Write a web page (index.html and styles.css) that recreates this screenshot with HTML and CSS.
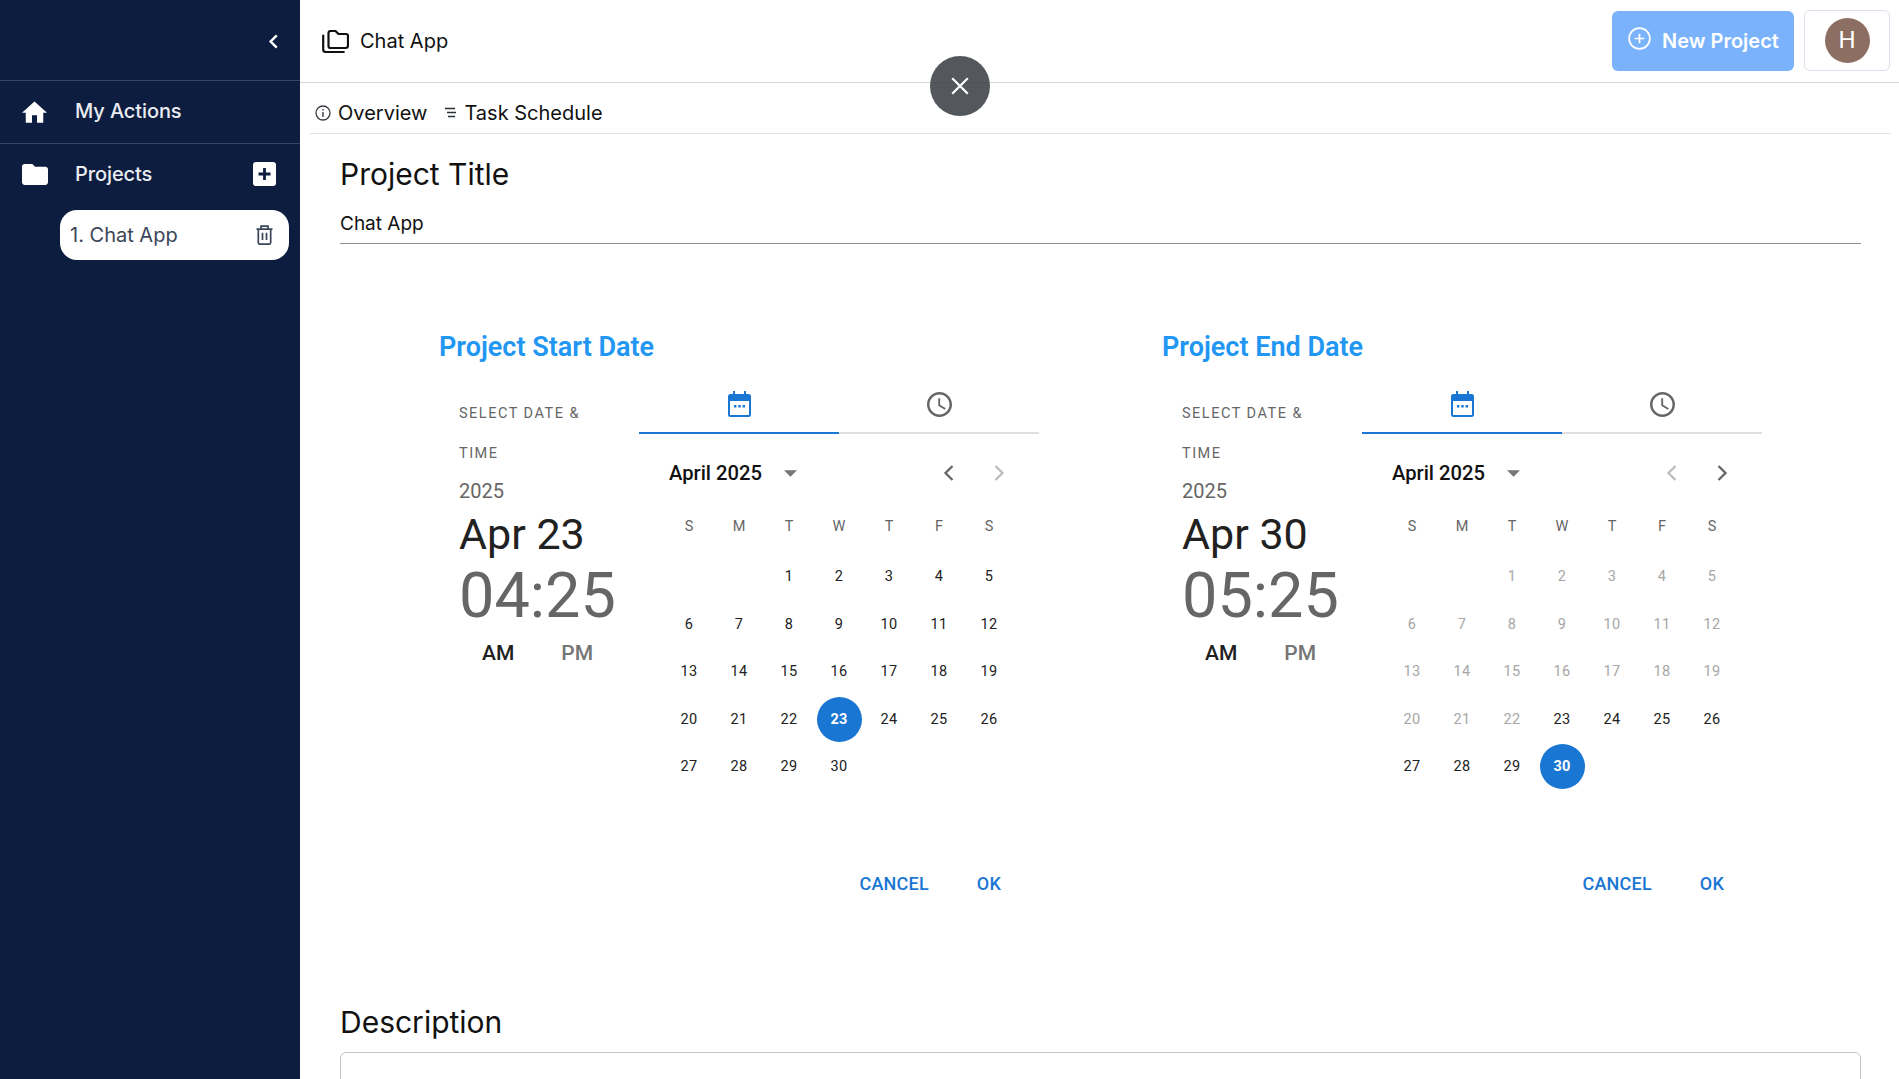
FILE: index.html
```html
<!DOCTYPE html>
<html lang="en">
<head>
<meta charset="utf-8">
<title>Chat App</title>
<link rel="stylesheet" href="styles.css">
</head>
<body>
<svg class="defs" width="0" height="0" aria-hidden="true">
  <symbol id="i-cal" viewBox="0 0 23 26">
    <path fill="currentColor" d="M5 0h2v3h9V0h2v3h2.5A2.5 2.5 0 0 1 23 5.500v18a2.500 2.500 0 0 1-2.500 2.500h-18A2.500 2.500 0 0 1 0 23.500v-18A2.500 2.500 0 0 1 2.500 3H5zM2 10v13.500a.5.5 0 0 0 .5.5h18a.5.5 0 0 0 .5-.5V10z"/>
    <path fill="currentColor" d="M6 14h2.400v2.400H6zM10.300 14h2.400v2.400h-2.400zM14.600 14H17v2.400h-2.400z"/>
  </symbol>
  <symbol id="i-clock" viewBox="2 2 20 20">
    <path fill="currentColor" d="M11.990 2C6.470 2 2 6.480 2 12s4.470 10 9.990 10C17.520 22 22 17.520 22 12S17.520 2 11.990 2zM12 20c-4.420 0-8-3.580-8-8s3.580-8 8-8 8 3.580 8 8-3.580 8-8 8zm.5-13H11v6l5.250 3.150.75-1.230-4.500-2.670z"/>
  </symbol>
  <symbol id="i-caret" viewBox="7 10 10 5"><path fill="currentColor" d="M7 10l5 5 5-5z"/></symbol>
  <symbol id="i-left" viewBox="0 0 12 18"><path fill="none" stroke="currentColor" stroke-width="2.300" d="M9.500 2 2.500 9l7 7"/></symbol>
  <symbol id="i-right" viewBox="0 0 12 18"><path fill="none" stroke="currentColor" stroke-width="2.300" d="M2.500 2l7 7-7 7"/></symbol>
</svg>

<div class="app">
  <aside class="sidebar">
    <div class="side-top">
      <svg class="side-collapse" viewBox="0 0 12 18"><path fill="none" stroke="#fff" stroke-width="2.600" d="M10 2.500 3.500 9l6.500 6.500"/></svg>
    </div>
    <div class="side-row side-actions">
      <svg class="side-home" viewBox="2 3 20 17"><path fill="#fff" d="M10 20v-6h4v6h5v-8h3L12 3 2 12h3v8z"/></svg>
      <span class="side-label">My Actions</span>
    </div>
    <div class="side-row side-projects">
      <svg class="side-folder" viewBox="2 4 20 16"><path fill="#fff" d="M10 4H4c-1.100 0-1.990.9-1.990 2L2 18c0 1.100.9 2 2 2h16c1.100 0 2-.9 2-2V8c0-1.100-.9-2-2-2h-8l-2-2z"/></svg>
      <span class="side-label">Projects</span>
      <svg class="side-add" viewBox="0 0 23 24"><rect width="23" height="24" rx="3" fill="#fff"/><path fill="none" stroke="#0d1d3f" stroke-width="2.800" d="M11.500 6v12M5.500 12h12"/></svg>
    </div>
    <div class="chip">
      <span>1. Chat App</span>
      <svg class="chip-trash" viewBox="0 0 17 20"><path fill="none" stroke="#3b4658" stroke-width="1.700" d="M.5 4.200h16M5 4.200V1.200h7v3M2.300 4.200v13.300a1.800 1.800 0 0 0 1.800 1.700h8.800a1.800 1.800 0 0 0 1.800-1.700V4.200M6.500 7.700v7.300M10.500 7.700v7.300"/></svg>
    </div>
  </aside>

  <main class="main">
    <header class="topbar">
      <div class="crumb">
        <svg class="crumb-icon" viewBox="0 0 28 23"><path fill="none" stroke="#111" stroke-width="2.200" stroke-linejoin="round" stroke-linecap="round" d="M2.200 5.500v14a2.500 2.500 0 0 0 2.500 2.500h18M7.500 3a2 2 0 0 1 2-2h5l3 3h7.500a2 2 0 0 1 2 2v9.500a2.500 2.500 0 0 1-2.500 2.500h-15a2 2 0 0 1-2-2z"/></svg>
        <span>Chat App</span>
      </div>
      <div class="top-actions">
        <button class="new-project" type="button">
          <svg class="new-icon" viewBox="0 0 24 24"><circle cx="12" cy="12" r="10.800" fill="none" stroke="#fff" stroke-width="1.800"/><path fill="none" stroke="#fff" stroke-width="1.800" d="M12 7v10M7 12h10"/></svg>
          <span>New Project</span>
        </button>
        <div class="avatar-box"><div class="avatar">H</div></div>
      </div>
    </header>

    <nav class="tabs">
      <span class="tab tab-first">
        <svg class="tab-info" viewBox="0 0 16 16"><circle cx="8" cy="8" r="7" fill="none" stroke="#3c3f46" stroke-width="1.300"/><path fill="none" stroke="#3c3f46" stroke-width="1.400" d="M8 7v5M8 4v1.500"/></svg>
        Overview
      </span>
      <span class="tab tab-second">
        <svg class="tab-list" viewBox="0 0 12 11"><path fill="none" stroke="#2a2d33" stroke-width="1.300" d="M1 1.500h10M3 5.500h9M4 9.500h7"/></svg>
        Task Schedule
      </span>
    </nav>

    <section class="form">
      <h2 class="form-title">Project Title</h2>
      <div class="field">Chat App</div>

      <div class="dates">
        <div class="date-col">
          <h3 class="date-heading">Project Start Date</h3>
          <div class="picker">
            <div class="toolbar">
              <div class="tb-label">SELECT DATE &amp; TIME</div>
              <div class="tb-year">2025</div>
              <div class="tb-date">Apr 23</div>
              <div class="tb-time">04:25</div>
              <div class="tb-ampm"><span class="tb-on">AM</span><span class="tb-off">PM</span></div>
            </div>
            <div class="pane">
              <div class="pick-tabs">
                <div class="pick-tab pick-tab-on"><svg class="pt-cal"><use href="#i-cal"/></svg></div>
                <div class="pick-tab"><svg class="pt-clock"><use href="#i-clock"/></svg></div>
              </div>
              <div class="cal-head">
                <span class="cal-month">April 2025</span>
                <svg class="cal-caret"><use href="#i-caret"/></svg>
                <span class="cal-nav">
                  <svg class="nav-btn"><use href="#i-left"/></svg>
                  <svg class="nav-btn nav-off"><use href="#i-right"/></svg>
                </span>
              </div>
              <div class="weekdays"><span>S</span><span>M</span><span>T</span><span>W</span><span>T</span><span>F</span><span>S</span></div>
              <div class="days">
                <span></span><span></span>
                <span>1</span><span>2</span><span>3</span><span>4</span><span>5</span>
                <span>6</span><span>7</span><span>8</span><span>9</span><span>10</span><span>11</span><span>12</span>
                <span>13</span><span>14</span><span>15</span><span>16</span><span>17</span><span>18</span><span>19</span>
                <span>20</span><span>21</span><span>22</span><span class="day-sel">23</span><span>24</span><span>25</span><span>26</span>
                <span>27</span><span>28</span><span>29</span><span>30</span>
              </div>
              <div class="pick-actions"><span>Cancel</span><span>OK</span></div>
            </div>
          </div>
        </div>

        <div class="date-col">
          <h3 class="date-heading">Project End Date</h3>
          <div class="picker">
            <div class="toolbar">
              <div class="tb-label">SELECT DATE &amp; TIME</div>
              <div class="tb-year">2025</div>
              <div class="tb-date">Apr 30</div>
              <div class="tb-time">05:25</div>
              <div class="tb-ampm"><span class="tb-on">AM</span><span class="tb-off">PM</span></div>
            </div>
            <div class="pane">
              <div class="pick-tabs">
                <div class="pick-tab pick-tab-on"><svg class="pt-cal"><use href="#i-cal"/></svg></div>
                <div class="pick-tab"><svg class="pt-clock"><use href="#i-clock"/></svg></div>
              </div>
              <div class="cal-head">
                <span class="cal-month">April 2025</span>
                <svg class="cal-caret"><use href="#i-caret"/></svg>
                <span class="cal-nav">
                  <svg class="nav-btn nav-off"><use href="#i-left"/></svg>
                  <svg class="nav-btn"><use href="#i-right"/></svg>
                </span>
              </div>
              <div class="weekdays"><span>S</span><span>M</span><span>T</span><span>W</span><span>T</span><span>F</span><span>S</span></div>
              <div class="days">
                <span></span><span></span>
                <span class="day-off">1</span><span class="day-off">2</span><span class="day-off">3</span><span class="day-off">4</span><span class="day-off">5</span>
                <span class="day-off">6</span><span class="day-off">7</span><span class="day-off">8</span><span class="day-off">9</span><span class="day-off">10</span><span class="day-off">11</span><span class="day-off">12</span>
                <span class="day-off">13</span><span class="day-off">14</span><span class="day-off">15</span><span class="day-off">16</span><span class="day-off">17</span><span class="day-off">18</span><span class="day-off">19</span>
                <span class="day-off">20</span><span class="day-off">21</span><span class="day-off">22</span><span>23</span><span>24</span><span>25</span><span>26</span>
                <span>27</span><span>28</span><span>29</span><span class="day-sel">30</span>
              </div>
              <div class="pick-actions"><span>Cancel</span><span>OK</span></div>
            </div>
          </div>
        </div>
      </div>

      <h2 class="form-title desc-title">Description</h2>
      <div class="desc-box"></div>
    </section>
  </main>
</div>

<button class="close-fab" type="button" aria-label="Close">
  <svg class="close-icon" viewBox="0 0 18 18"><path fill="none" stroke="#fff" stroke-width="2" d="M2 2l14 14M16 2 2 16"/></svg>
</button>
</body>
</html>
```

FILE: styles.css
```css
* { box-sizing: border-box; }
html, body { margin: 0; height: 1079px; overflow: hidden; background: #fff; }
body { font-family: "Inter", "Liberation Sans", sans-serif; color: #111; }
.defs { position: absolute; }
svg { display: block; }
.app { display: flex; height: 1079px; overflow: hidden; }

/* sidebar */
.sidebar { width: 300px; flex: none; background: #0d1d3f; color: #fff; }
.side-top { height: 81px; border-bottom: 1px solid #39465f; display: flex; align-items: flex-start; justify-content: flex-end; padding: 33px 21px 0 0; }
.side-collapse { width: 12px; height: 17px; }
.side-row { display: flex; align-items: center; padding-left: 22px; }
.side-actions { height: 63px; border-bottom: 1px solid #39465f; padding-bottom: 2px; }
.side-projects { height: 66px; padding-right: 24px; padding-bottom: 6px; }
.side-label { font-size: 20px; font-weight: 500; letter-spacing: -.1px; color: #e9ecf1; margin-left: 28px; }
.side-home { width: 25px; height: 22px; margin-top: 2px; }
.side-folder { width: 26px; height: 21px; margin-right: -1px; }
.side-add { width: 23px; height: 24px; margin-left: auto; }
.chip { margin: 0 11px 0 60px; height: 50px; border-radius: 17px; background: #fff; color: #3b4658; display: flex; align-items: center; justify-content: space-between; padding: 0 16px 0 10px; font-size: 20px; }
.chip-trash { width: 17px; height: 20px; }

/* top bar */
.main { flex: 1; min-width: 0; }
.topbar { height: 83px; border-bottom: 1px solid #d3d4dc; display: flex; align-items: flex-start; justify-content: space-between; padding: 10px 9px 0 21px; }
.crumb { display: flex; align-items: center; gap: 11px; font-size: 20px; margin-top: 19px; }
.crumb-icon { width: 28px; height: 23px; margin-top: 1px; }
.top-actions { display: flex; gap: 10px; }
.new-project { width: 182px; height: 60px; margin-top: 1px; border: 0; border-radius: 6px; background: #7ab3fb; color: #fff; display: flex; align-items: center; padding: 0 0 0 16px; font: 600 20px "Inter", sans-serif; }
.new-icon { width: 23px; height: 23px; margin: -6px 11px 0 0; }
.avatar-box { width: 86px; height: 61px; border: 1px solid #d6dfea; border-radius: 6px; display: flex; align-items: center; justify-content: center; }
.avatar { width: 45px; height: 45px; border-radius: 50%; background: #8d6e63; color: #fff; font: 400 24px/45px "Roboto", sans-serif; text-align: center; }

/* tabs */
.tabs { height: 51px; margin: 0 8px 0 10px; border-bottom: 1px solid #e3e3e6; display: flex; align-items: center; font-size: 20px; padding-top: 9px; }
.tab { display: flex; align-items: center; }
.tab-first { padding-left: 5px; }
.tab-second { margin-left: 17px; }
.tab-info { width: 16px; height: 16px; margin-right: 7px; }
.tab-list { width: 12px; height: 11px; margin-right: 8px; }

/* form */
.form { padding: 0 38px 0 40px; }
.form-title { margin: 20px 0 0; font: 400 30px/40px "Inter", sans-serif; color: #111; }
.field { margin-top: 18px; height: 32px; border-bottom: 1.500px solid #8f8f8f; font: 400 19px/24px "Inter", sans-serif; }
.dates { margin-top: 88px; padding-left: 99px; display: grid; grid-template-columns: 723px 400px; font-family: "Roboto", sans-serif; }
.date-heading { margin: 0; font: 600 27px/30px "Roboto", sans-serif; color: #2196f3; }
.picker { display: flex; }

.toolbar { width: 200px; flex: none; padding: 32px 0 0 20px; color: #666; }
.tb-label { width: 150px; font-size: 14.500px; line-height: 40px; letter-spacing: 1.500px; }
.tb-year { margin-top: 5px; font-size: 20px; line-height: 24px; }
.tb-date { margin-top: 6px; font-size: 43px; line-height: 50px; color: #212121; }
.tb-time { margin-top: 2px; font-size: 63px; line-height: 70px; }
.tb-ampm { margin-top: 9px; padding-left: 23px; display: flex; gap: 47px; font-size: 21px; line-height: 26px; font-weight: 500; }
.tb-on { color: #212121; }
.tb-off { color: #757575; }

.pane { width: 400px; flex: none; }
.pick-tabs { display: flex; height: 72px; }
.pick-tab { width: 200px; border-bottom: 2px solid #e0e0e0; padding-top: 30px; color: #666; display: flex; justify-content: center; }
.pick-tab-on { border-bottom-color: #1976d2; color: #1976d2; padding-top: 29px; }
.pt-cal { width: 23px; height: 26px; }
.pt-clock { width: 25px; height: 25px; }

.cal-head { display: flex; align-items: center; height: 30px; margin-top: 24px; padding: 0 34px 0 30px; }
.cal-month { font-size: 20.200px; font-weight: 500; color: #111; }
.cal-caret { width: 13px; height: 7px; margin-left: 22px; color: #757575; }
.cal-nav { margin-left: auto; display: flex; gap: 38px; color: #666; }
.nav-btn { width: 12px; height: 18px; }
.nav-off { color: #bdbdbd; }

.weekdays, .days { display: grid; grid-template-columns: repeat(7, 50px); padding-left: 25px; text-align: center; }
.weekdays { margin-top: 27px; font-size: 14.500px; line-height: 24px; color: #666; }
.days { margin-top: 14px; grid-auto-rows: 47.500px; font-size: 14.500px; color: #212121; letter-spacing: .3px; }
.days span { display: flex; align-items: center; justify-content: center; }
.day-off { color: #a6a6a6; }
.days .day-sel { width: 45px; height: 45px; margin: 1px auto 0; border-radius: 50%; background: #1976d2; color: #fff; font-weight: 700; }
.pick-actions { margin-top: 81px; padding-right: 38px; display: flex; justify-content: flex-end; gap: 48px; font-size: 18px; line-height: 24px; font-weight: 500; letter-spacing: .2px; color: #1976d2; text-transform: uppercase; }

.desc-title { margin-top: 106px; }
.desc-box { margin-top: 10px; height: 120px; border: 1.500px solid #c4c4c4; border-radius: 6px; }

.close-fab { position: absolute; left: 930px; top: 56px; width: 60px; height: 60px; border: 0; padding: 0; border-radius: 50%; background: rgba(59, 62, 67, .87); display: flex; align-items: center; justify-content: center; }
.close-icon { width: 20px; height: 20px; }
```
